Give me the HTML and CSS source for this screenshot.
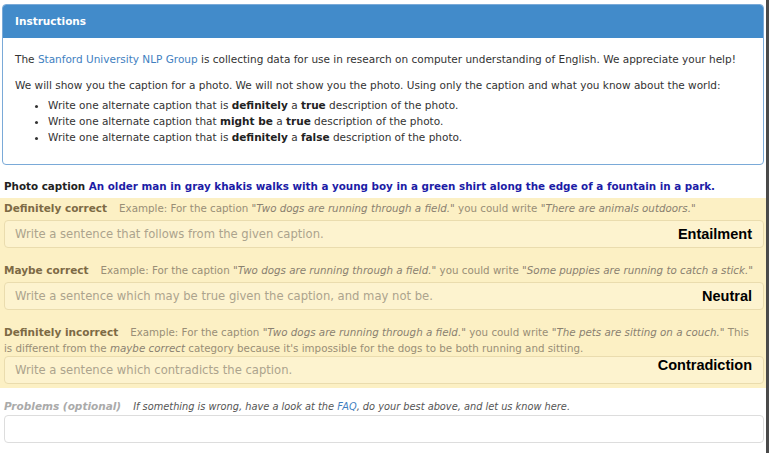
FILE: index.html
```html
<!DOCTYPE html>
<html>
<head>
<meta charset="utf-8">
<link rel="stylesheet" href="styles.css">
</head>
<body>
<div class="page">
  <div class="panel">
    <div class="panel-head">Instructions</div>
    <div class="panel-body">
      <p>The <a class="link" href="#">Stanford University NLP Group</a> is collecting data for use in research on computer understanding of English. We appreciate your help!</p>
      <p class="lead">We will show you the caption for a photo. We will not show you the photo. Using only the caption and what you know about the world:</p>
      <ul>
        <li>Write one alternate caption that is <b>definitely</b> a <b>true</b> description of the photo.</li>
        <li>Write one alternate caption that <b>might be</b> a <b>true</b> description of the photo.</li>
        <li>Write one alternate caption that is <b>definitely</b> a <b>false</b> description of the photo.</li>
      </ul>
    </div>
  </div>

  <div class="caption"><b>Photo caption</b> <span class="caption-text">An older man in gray khakis walks with a young boy in a green shirt along the edge of a fountain in a park.</span></div>

  <div class="tasks">
    <div class="group">
      <div class="label"><b class="lbl">Definitely correct</b><span class="ex">Example: For the caption <i>"Two dogs are running through a field."</i> you could write <i>"There are animals outdoors."</i></span></div>
      <div class="field">
        <input class="inp" type="text" placeholder="Write a sentence that follows from the given caption.">
        <span class="tag">Entailment</span>
      </div>
    </div>
    <div class="group">
      <div class="label"><b class="lbl">Maybe correct</b><span class="ex">Example: For the caption <i>"Two dogs are running through a field."</i> you could write <i>"Some puppies are running to catch a stick."</i></span></div>
      <div class="field">
        <input class="inp" type="text" placeholder="Write a sentence which may be true given the caption, and may not be.">
        <span class="tag">Neutral</span>
      </div>
    </div>
    <div class="group last">
      <div class="label"><b class="lbl">Definitely incorrect</b><span class="ex">Example: For the caption <i>"Two dogs are running through a field."</i> you could write <i>"The pets are sitting on a couch."</i> This is different from the <i>maybe correct</i> category because it's impossible for the dogs to be both running and sitting.</span></div>
      <div class="field">
        <input class="inp" type="text" placeholder="Write a sentence which contradicts the caption.">
        <span class="tag tag-up">Contradiction</span>
      </div>
    </div>
  </div>

  <div class="problems">
    <div class="label"><b class="plbl">Problems (optional)</b><i class="pex">If something is wrong, have a look at the <a class="link" href="#">FAQ</a>, do your best above, and let us know here.</i></div>
    <input class="inp white" type="text">
  </div>
</div>
</body>
</html>
```

FILE: styles.css
```css
html, body {
  margin: 0;
  padding: 0;
  background: #fff;
}
body {
  font-family: "DejaVu Sans", Verdana, sans-serif;
  font-size: 10.5px;
  line-height: 16px;
  color: #333;
}
.page {
  width: 766px;
  height: 453px;
  border-right: 3px solid #4a4a4a;
  box-sizing: content-box;
  overflow: hidden;
}
.link {
  color: #3f7fbf;
  text-decoration: none;
}
.panel {
  margin: 4px 2px 0 2px;
  border: 1px solid #7aaad8;
  border-radius: 4px;
  overflow: hidden;
}
.panel-head {
  background: #428bca;
  color: #fff;
  font-weight: bold;
  height: 33px;
  line-height: 33px;
  padding: 0 12px;
}
.panel-body {
  padding: 13px 12px 15px 12px;
}
.panel-body p {
  margin: 0 0 10px 0;
}
.panel-body p.lead {
  margin-bottom: 4px;
}
.panel-body ul {
  margin: 0 0 4px 0;
  padding-left: 33px;
}
.panel-body b {
  color: #222;
}
.caption {
  margin-top: 13px;
  padding-left: 4px;
  font-weight: bold;
  font-size: 10.35px;
  color: #222;
}
.caption-text {
  color: #1c1ca6;
}
.tasks {
  margin-top: 4px;
  background: #fcf0c4;
  padding: 2px 2px 4px 4px;
}
.group {
  margin-bottom: 14px;
}
.group.last {
  margin-bottom: 0;
}
.label {
  display: block;
}
.tasks .label {
  padding-right: 8px;
}
.lbl {
  color: #7d6a45;
  margin-right: 12px;
}
.ex {
  color: #998e76;
  font-size: 10.3px;
}
.ex i {
  color: #8a8170;
}
.field {
  position: relative;
  margin-top: 4px;
}
.group.last .field {
  margin-top: 0;
}
.inp {
  display: block;
  width: 100%;
  box-sizing: border-box;
  height: 28px;
  margin: 0;
  padding: 0 10px;
  font-family: "DejaVu Sans", Verdana, sans-serif;
  font-size: 11.6px;
  color: #333;
  background: #fdf3cf;
  border: 1px solid #eadcae;
  border-radius: 4px;
  outline: none;
}
.inp::placeholder {
  color: #aca38d;
}
.tag {
  position: absolute;
  right: 12px;
  top: 0;
  line-height: 28px;
  font-family: "Liberation Sans", Arial, sans-serif;
  font-weight: bold;
  font-size: 14.5px;
  color: #000;
}
.tag-up {
  top: -5px;
}
.problems {
  padding: 10px 2px 0 4px;
}
.plbl {
  font-style: italic;
  color: #aaa;
  margin-right: 12px;
}
.pex {
  color: #555;
  font-size: 9.8px;
}
.inp.white {
  background: #fff;
  border-color: #ddd;
}
```
